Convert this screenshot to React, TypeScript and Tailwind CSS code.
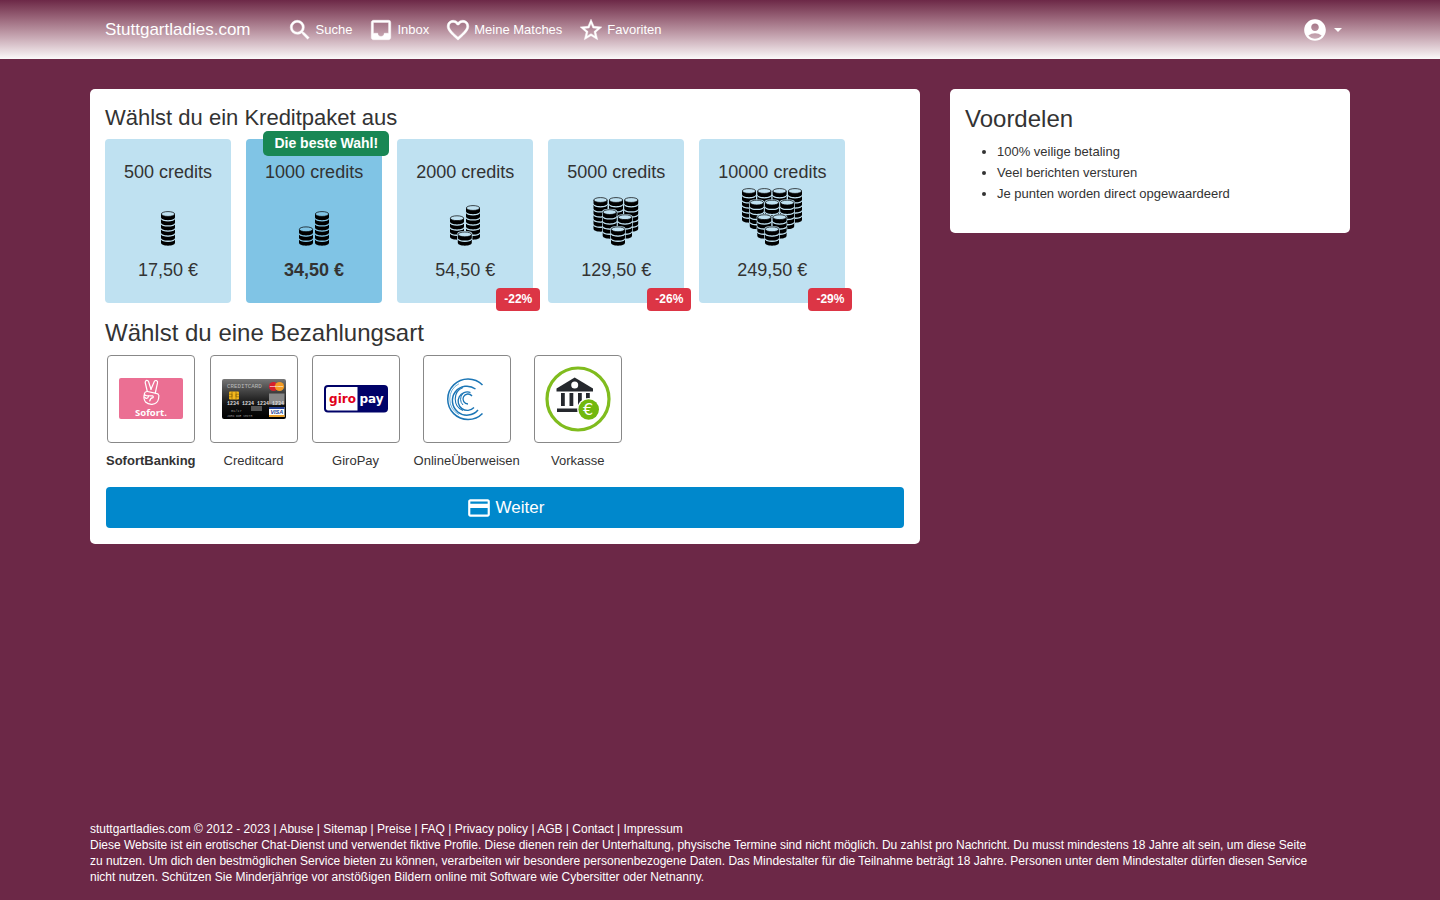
import { useState } from 'react';
import type { ReactNode } from 'react';
import {
  MdAccountCircle,
  MdCreditCard,
  MdFavoriteBorder,
  MdInbox,
  MdSearch,
  MdStarBorder,
} from 'react-icons/md';

type Stack = { x: number; bottom: number; coins: number };

type CreditPackage = {
  credits: number;
  price: string;
  discount?: string;
  best?: boolean;
  width: number;
  stacks: Stack[];
};

const NAV_ITEMS = [
  { label: 'Suche',         Icon: MdSearch },
  { label: 'Inbox',         Icon: MdInbox },
  { label: 'Meine Matches', Icon: MdFavoriteBorder },
  { label: 'Favoriten',     Icon: MdStarBorder },
];

// Stacks are listed back to front
const PACKAGES: CreditPackage[] = [
  {
    credits: 500,
    price: '17,50 €',
    width: 16,
    stacks: [{ x: 1, bottom: 60, coins: 6 }],
  },
  {
    credits: 1000,
    price: '34,50 €',
    best: true,
    width: 32,
    stacks: [
      { x: 1, bottom: 60, coins: 3 },
      { x: 17, bottom: 60, coins: 6 },
    ],
  },
  {
    credits: 2000,
    price: '54,50 €',
    discount: '-22%',
    width: 32,
    stacks: [
      { x: 1, bottom: 54, coins: 4 },
      { x: 17, bottom: 54, coins: 6 },
      { x: 8.8, bottom: 60, coins: 2 },
    ],
  },
  {
    credits: 5000,
    price: '129,50 €',
    discount: '-26%',
    width: 48,
    stacks: [
      { x: 1.5, bottom: 46, coins: 6 },
      { x: 17, bottom: 46, coins: 6 },
      { x: 32.2, bottom: 46, coins: 6 },
      { x: 10.7, bottom: 53, coins: 5 },
      { x: 26, bottom: 53, coins: 4 },
      { x: 19, bottom: 60, coins: 3 },
    ],
  },
  {
    credits: 10000,
    price: '249,50 €',
    discount: '-29%',
    width: 62,
    stacks: [
      { x: 1, bottom: 37, coins: 6 },
      { x: 16.3, bottom: 37, coins: 6 },
      { x: 31.6, bottom: 37, coins: 6 },
      { x: 47, bottom: 37, coins: 6 },
      { x: 8.8, bottom: 43.5, coins: 5 },
      { x: 24, bottom: 43.5, coins: 5 },
      { x: 39.2, bottom: 43.5, coins: 5 },
      { x: 16.3, bottom: 53, coins: 4 },
      { x: 31.6, bottom: 53, coins: 4 },
      { x: 24, bottom: 60, coins: 3 },
    ],
  },
];

const BENEFITS = [
  '100% veilige betaling',
  'Veel berichten versturen',
  'Je punten worden direct opgewaardeerd',
];

const FOOTER_LINKS = ['Abuse', 'Sitemap', 'Preise', 'FAQ', 'Privacy policy', 'AGB', 'Contact', 'Impressum'];

function CoinStacks({ width, stacks, background }: { width: number; stacks: Stack[]; background: string }) {
  return (
    <svg width={width} height={60} viewBox={`0 0 ${width} 60`} aria-hidden="true">
      {stacks.map((stack) => (
        <g key={`${stack.x}-${stack.bottom}`}>
          {Array.from({ length: stack.coins }, (_, i) => {
            const y = stack.bottom - 9.2 - i * 5.1;
            const isTop = i === stack.coins - 1;
            return (
              <g key={i} transform={`translate(${stack.x} ${y})`}>
                <path
                  d="M0 2.6V6C0 7.700 3 8.900 7 8.900S14 7.700 14 6V2.600C14 1.100 11 .1 7 .1S0 1.100 0 2.600z"
                  fill={background}
                  stroke={background}
                  strokeWidth="1.4"
                />
                <path d="M0 2.600V6C0 7.700 3 8.900 7 8.900S14 7.700 14 6V2.600z" fill="#000" />
                <ellipse
                  cx="7"
                  cy="2.7"
                  rx="6.7"
                  ry="2.4"
                  fill={background}
                  stroke={isTop ? '#000' : 'none'}
                  strokeWidth="0.7"
                />
              </g>
            );
          })}
        </g>
      ))}
    </svg>
  );
}

function SofortLogo() {
  return (
    <svg width="64" height="64" viewBox="0 0 64 64" aria-hidden="true">
      <rect y="11" width="64" height="41" rx="2" fill="#eb6f93" />
      <g fill="none" stroke="#fff" strokeWidth="1.2" strokeLinecap="round" strokeLinejoin="round">
        <path d="M28.300 24.500 26.200 15.500Q26.100 13.700 27.600 13.400 29.100 13.200 29.600 14.800L32 22.300" />
        <path d="M32 22.300 35.300 14.500Q36 13.200 37.500 13.600 39 14.200 38.500 15.800L36.300 26" />
        <path d="M25.400 27.200Q24 31.500 26.500 35 29 37.500 33 37.300 38.700 36.800 39.600 31.500L39.900 28.500Q39.500 26.500 37.200 26.300L28.500 24.500Q25.800 24.300 25.400 26.500 25.400 28.500 27.600 28.700L33.500 28.900Q34.800 29.500 34 30.700 31.500 30.900 30.700 34" />
        <path d="M25.600 30.200Q27 32.200 28.900 30.700L29.500 29" />
      </g>
      <text x="32" y="48.500" textAnchor="middle" fontSize="9.500" fontWeight="700" fontFamily="Open Sans, sans-serif" fill="#fff">
        Sofort.
      </text>
    </svg>
  );
}

function CreditcardLogo() {
  return (
    <svg width="64" height="64" viewBox="0 0 64 64" aria-hidden="true">
      <defs>
        <linearGradient id="card-face" x1="0" y1="0" x2="0" y2="1">
          <stop offset="0" stopColor="#777" />
          <stop offset="0.3" stopColor="#444" />
          <stop offset="0.65" stopColor="#111" />
          <stop offset="1" stopColor="#000" />
        </linearGradient>
      </defs>
      <rect y="12" width="64" height="40" rx="2" fill="url(#card-face)" />
      <rect x="47" y="26.500" width="15.500" height="11" fill="#888" />
      <rect x="29" y="39" width="11" height="5" fill="#555" />
      <g fontFamily="Liberation Mono, monospace">
        <text x="5" y="20.500" fontSize="5.800" fill="#bbb">CREDITCARD</text>
        <text x="5" y="37.500" fontSize="5" fontWeight="700" fill="#ddd">1234 1234 1234 1234</text>
        <text x="9" y="45" fontSize="3.500" fill="#999">01/17</text>
        <text x="5" y="50" fontSize="3" fill="#999">JOHN DOE SMITH</text>
      </g>
      <rect x="7" y="24.500" width="10" height="8" rx="1" fill="#f4b81c" />
      <path d="M7 27.200h3v2.600H7M17 27.200h-3v2.600h3M10 24.500v8M14 24.500v8" fill="none" stroke="#8c6508" strokeWidth="0.7" />
      <circle cx="51.500" cy="19.500" r="4.600" fill="#d5202c" />
      <circle cx="57.500" cy="19.500" r="4.600" fill="#f39b25" />
      <text x="54.500" y="20.400" textAnchor="middle" fontSize="2.400" fontWeight="700" fontFamily="Liberation Sans, sans-serif" fill="#fff">
        MasterCard
      </text>
      <rect x="47" y="40" width="15.500" height="10" fill="#fff" />
      <path d="M47 40h15.500v2H47z" fill="#233f91" />
      <path d="M47 48h15.500v2H47z" fill="#e9a12c" />
      <text x="54.800" y="47.300" textAnchor="middle" fontSize="5.500" fontWeight="700" fontStyle="italic" fontFamily="Liberation Sans, sans-serif" fill="#233f91">
        VISA
      </text>
    </svg>
  );
}

function GiroPayLogo() {
  return (
    <svg width="64" height="64" viewBox="0 0 64 64" aria-hidden="true">
      <rect y="18" width="64" height="27.500" rx="4" fill="#000268" />
      <path d="M4 20h29.500v23.500H4a2 2 0 0 1-2-2V22a2 2 0 0 1 2-2z" fill="#fff" />
      <g fontSize="12" fontWeight="700" fontFamily="DejaVu Sans, sans-serif" textAnchor="middle">
        <text x="18.500" y="35.500" fill="#e1001a">giro</text>
        <text x="47.500" y="35.500" fill="#fff">pay</text>
      </g>
    </svg>
  );
}

function OnlineUeberweisenLogo() {
  return (
    <svg width="64" height="64" viewBox="0 0 64 64" aria-hidden="true">
      <g fill="none" stroke="#1b75b5">
        <path d="M47.500 18A20.300 20.300 0 1 0 47.500 46.500" strokeWidth="1.500" />
        <path d="M24 16.700A17.500 17.500 0 0 0 24 47.500" strokeWidth="0.900" stroke="#5ba8d8" />
        <path d="M40.500 22A14.500 14.500 0 1 0 43 43" strokeWidth="1.500" />
        <path d="M28 20.500A12.400 12.400 0 0 0 28 43.500" strokeWidth="1.100" />
        <path d="M35.500 25.500A9.200 9.200 0 1 0 39 40.500" strokeWidth="1.300" />
        <path d="M28 26.500A8 8 0 0 0 28 38" strokeWidth="1" />
        <path d="M37 29A5 5 0 1 0 33 37" strokeWidth="1.300" />
      </g>
    </svg>
  );
}

function VorkasseLogo() {
  return (
    <svg width="66" height="66" viewBox="0 0 66 66" aria-hidden="true">
      <circle cx="33" cy="33" r="31" fill="#fff" stroke="#80bc1e" strokeWidth="3.200" />
      <path d="M29.700 11.500 48 22.500V25.500H11.500V22.500z" fill="#25282d" />
      <circle cx="29.700" cy="19" r="3.500" fill="#fff" />
      <path d="M16 27h3.800v13H16zM24.500 27h3.800v13h-3.800zM33 27h3.800v13H33zM41 27h3.800v9H41zM12 42.500h24v3.500H12z" fill="#25282d" />
      <circle cx="43.700" cy="43.500" r="11.500" fill="#fff" />
      <circle cx="43.700" cy="43.500" r="10.300" fill="#72b80e" />
      <text x="43.200" y="49.300" textAnchor="middle" fontSize="16" fontFamily="DejaVu Sans, sans-serif" fill="#fff">€</text>
    </svg>
  );
}

const PAYMENTS: { label: string; logo: ReactNode }[] = [
  { label: 'SofortBanking',    logo: <SofortLogo /> },
  { label: 'Creditcard',       logo: <CreditcardLogo /> },
  { label: 'GiroPay',          logo: <GiroPayLogo /> },
  { label: 'OnlineÜberweisen', logo: <OnlineUeberweisenLogo /> },
  { label: 'Vorkasse',         logo: <VorkasseLogo /> },
];

function Navbar() {
  return (
    <header className="bg-linear-to-b from-[#6c2847] to-[#fbf9fa] text-white">
      <nav className="mx-auto flex h-[59px] max-w-[1260px] items-center px-[15px]">
        <a href="#" className="mr-9 text-[17px]">Stuttgartladies.com</a>
        <ul className="flex items-center gap-4">
          {NAV_ITEMS.map(({ label, Icon }) => (
            <li key={label}>
              <a href="#" className="flex items-center gap-[3px]">
                <Icon size={26} strokeWidth={0.4} className="[&>path[fill=none]]:stroke-none" />
                {label}
              </a>
            </li>
          ))}
        </ul>
        <button type="button" aria-label="Konto" className="-mr-[7px] ml-auto flex items-center gap-1.5">
          <MdAccountCircle size={26} />
          <span className="border-x-4 border-t-4 border-x-transparent border-t-white" />
        </button>
      </nav>
    </header>
  );
}

function PackageCard({ pack, selected, onSelect }: { pack: CreditPackage; selected: boolean; onSelect: () => void }) {
  return (
    <label
      className={`relative flex cursor-pointer flex-col items-center rounded px-[19px] pt-5 pb-[19px] text-[18px] leading-[27px] ${
        selected ? 'bg-[#80c4e5]' : 'bg-[#bfe1f1]'
      }`}
    >
      <input
        type="radio"
        name="package"
        value={pack.credits}
        checked={selected}
        onChange={onSelect}
        className="sr-only"
      />
      <span>{pack.credits} credits</span>
      <span className="mb-[11px]">
        <CoinStacks width={pack.width} stacks={pack.stacks} background={selected ? '#80c4e5' : '#bfe1f1'} />
      </span>
      <span className={selected ? 'font-bold' : ''}>{pack.price}</span>

      {pack.best && (
        <span className="absolute -top-2 -right-[7px] rounded-[5px] bg-[#198754] px-[11px] text-[14px] leading-[25px] font-bold whitespace-nowrap text-white">
          Die beste Wahl!
        </span>
      )}
      {pack.discount && (
        <span className="absolute -right-[7px] -bottom-2 rounded bg-[#dc3545] px-2 text-[12px] leading-[23px] font-bold text-white">
          {pack.discount}
        </span>
      )}
    </label>
  );
}

export default function App() {
  const [credits, setCredits] = useState(1000);
  const [payment, setPayment] = useState('SofortBanking');

  return (
    <div className="flex min-h-screen flex-col bg-[#6c2847] font-['Liberation_Sans',Arial,sans-serif] text-[13px] leading-5 text-[#333]">
      <Navbar />

      <main className="mx-auto flex w-full max-w-[1290px] grow items-start pt-[30px]">
        <div className="w-2/3 px-[15px]">
          <form className="rounded-[5px] bg-white px-[15px] pt-[15px] pb-4" onSubmit={(e) => e.preventDefault()}>
            {/* Packages */}
            <h2 className="mb-2 text-[22px] leading-[27px]">Wählst du ein Kreditpaket aus</h2>
            <div className="flex flex-wrap gap-[15px]">
              {PACKAGES.map((pack) => (
                <PackageCard
                  key={pack.credits}
                  pack={pack}
                  selected={pack.credits === credits}
                  onSelect={() => setCredits(pack.credits)}
                />
              ))}
            </div>

            {/* Payment methods */}
            <h2 className="mt-4 mb-[9px] text-[24px] leading-[27px]">Wählst du eine Bezahlungsart</h2>
            <div className="flex flex-wrap gap-3.5 px-px">
              {PAYMENTS.map(({ label, logo }) => (
                <label key={label} className="relative flex cursor-pointer flex-col items-center gap-2">
                  <input
                    type="radio"
                    name="payment"
                    value={label}
                    checked={label === payment}
                    onChange={() => setPayment(label)}
                    className="sr-only"
                  />
                  <span className="flex size-[88px] items-center justify-center rounded border border-[#888]">
                    {logo}
                  </span>
                  <span className={label === payment ? 'font-bold' : ''}>{label}</span>
                </label>
              ))}
            </div>

            <div className="mt-4 px-px">
              <button
                type="submit"
                className="flex h-[41px] w-full items-center justify-center gap-1 rounded bg-[#0088cc] text-[17px] text-white"
              >
                <MdCreditCard size={26} />
                Weiter
              </button>
            </div>
          </form>
        </div>

        <aside className="w-1/3 px-[15px]">
          <div className="rounded-[5px] bg-white px-[15px] pt-[15px] pb-[29px]">
            <h2 className="mb-2 text-[24px] leading-[29px]">Voordelen</h2>
            <ul className="list-disc pl-8 leading-[21px]">
              {BENEFITS.map((benefit) => (
                <li key={benefit}>{benefit}</li>
              ))}
            </ul>
          </div>
        </aside>
      </main>

      <footer className="mx-auto w-full max-w-[1290px] px-[15px] pt-4 pb-[15px] text-[12px] leading-4 text-white">
        <p>
          stuttgartladies.com © 2012 - 2023
          {FOOTER_LINKS.map((link) => (
            <span key={link}>
              {' | '}
              <a href="#">{link}</a>
            </span>
          ))}
        </p>
        <p className="max-w-[1226px]">
          Diese Website ist ein erotischer Chat-Dienst und verwendet fiktive Profile. Diese dienen rein der
          Unterhaltung, physische Termine sind nicht möglich. Du zahlst pro Nachricht. Du musst mindestens 18 Jahre
          alt sein, um diese Seite zu nutzen. Um dich den bestmöglichen Service bieten zu können, verarbeiten wir
          besondere personenbezogene Daten. Das Mindestalter für die Teilnahme beträgt 18 Jahre. Personen unter dem
          Mindestalter dürfen diesen Service nicht nutzen. Schützen Sie Minderjährige vor anstößigen Bildern online
          mit Software wie Cybersitter oder Netnanny.
        </p>
      </footer>
    </div>
  );
}
